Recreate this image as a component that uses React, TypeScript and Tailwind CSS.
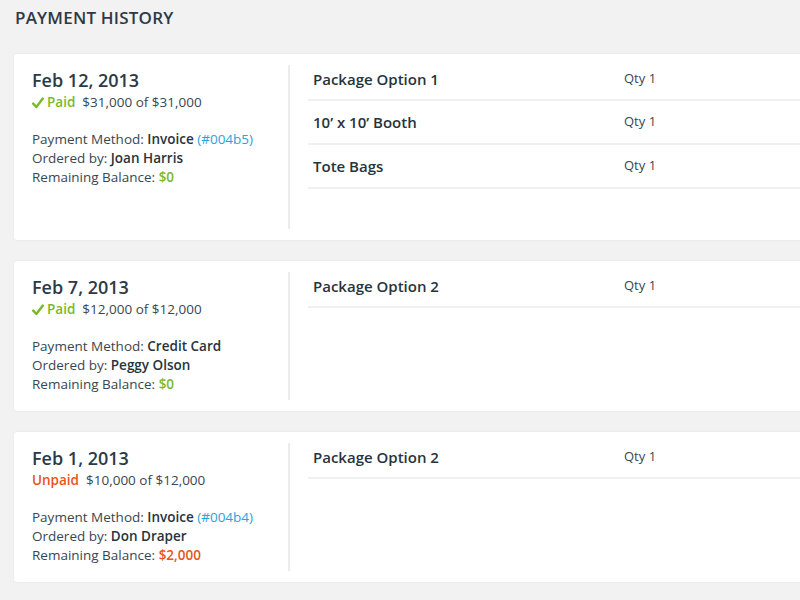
import React from "react";

type Item = { name: string };
type Pay = {
  date: string; paid: boolean; amount: string; method: string; invoice?: string;
  by: string; balance: string; items: string[];
};

const data: Pay[] = [
  { date: "Feb 12, 2013", paid: true, amount: "$31,000 of $31,000", method: "Invoice", invoice: "(#004b5)", by: "Joan Harris", balance: "$0", items: ["Package Option 1", "10’ x 10’ Booth", "Tote Bags"] },
  { date: "Feb 7, 2013", paid: true, amount: "$12,000 of $12,000", method: "Credit Card", by: "Peggy Olson", balance: "$0", items: ["Package Option 2"] },
  { date: "Feb 1, 2013", paid: false, amount: "$10,000 of $12,000", method: "Invoice", invoice: "(#004b4)", by: "Don Draper", balance: "$2,000", items: ["Package Option 2"] },
];

function Check() {
  return (
    <svg width="12" height="12" viewBox="0 0 12 12" className="mr-[3px]">
      <path d="M1.2 6.6 L4.4 10 L10.8 1.6" fill="none" stroke="#7ab929" strokeWidth="2.4" strokeLinecap="round" strokeLinejoin="round" />
    </svg>
  );
}

function Card({ p }: { p: Pay }) {
  const green = "text-[#7ab929]";
  const orange = "text-[#e8541a]";
  return (
    <div className="w-[830px] bg-white rounded-[3px] shadow-[0_0_2px_rgba(0,0,0,0.08)] flex py-[11px]">
      <div className="w-[276px] shrink-0 border-r-2 border-[#ececec] pl-[18px] pt-[3px] pb-[6px]">
        <div className="text-[18px] leading-[24px] font-semibold text-[#2c3a46]">{p.date}</div>
        <div className="flex items-center text-[13.5px] leading-[23px] mt-[-1px]">
          {p.paid ? (
            <span className={`flex items-center font-semibold ${green}`}><Check />Paid</span>
          ) : (
            <span className={`font-semibold ${orange}`}>Unpaid</span>
          )}
          <span className="ml-[7px] text-[#3a4650]">{p.amount}</span>
        </div>
        <div className="mt-[16px] text-[13.5px] leading-[19px] text-[#3a4650]">
          <div>Payment Method: <b className="font-semibold text-[#27333d]">{p.method}</b>{p.invoice && <span className="text-[#2aa2dc]"> {p.invoice}</span>}</div>
          <div>Ordered by: <b className="font-semibold text-[#27333d]">{p.by}</b></div>
          <div>Remaining Balance: <b className={`font-semibold ${p.paid ? green : orange}`}>{p.balance}</b></div>
        </div>
      </div>
      <div className="flex-1 pl-[18px] pb-[40px]">
        {p.items.map((it, i) => (
          <div key={i} className={`flex items-center border-b-2 border-[#f0f0f0] ${i === 0 ? "h-[36px] pb-[6px]" : "h-[44px]"}`}>
            <div className="w-[316px] pl-[5px] text-[15px] font-semibold text-[#27333d]">{it}</div>
            <div className="text-[13px] text-[#3a4650]">Qty 1</div>
          </div>
        ))}
      </div>
    </div>
  );
}

export default function App() {
  return (
    <div className="w-[800px] h-[600px] overflow-hidden bg-[#f2f2f2] pl-[14px]" style={{ fontFamily: "'Open Sans', sans-serif" }}>
      <div className="pt-[7px] pl-[1px] text-[17px] leading-[22px] font-semibold text-[#2c3a46] tracking-[0.2px]">PAYMENT HISTORY</div>
      <div className="mt-[25px] flex flex-col gap-[21px]">
        {data.map((p, i) => <Card key={i} p={p} />)}
      </div>
    </div>
  );
}
